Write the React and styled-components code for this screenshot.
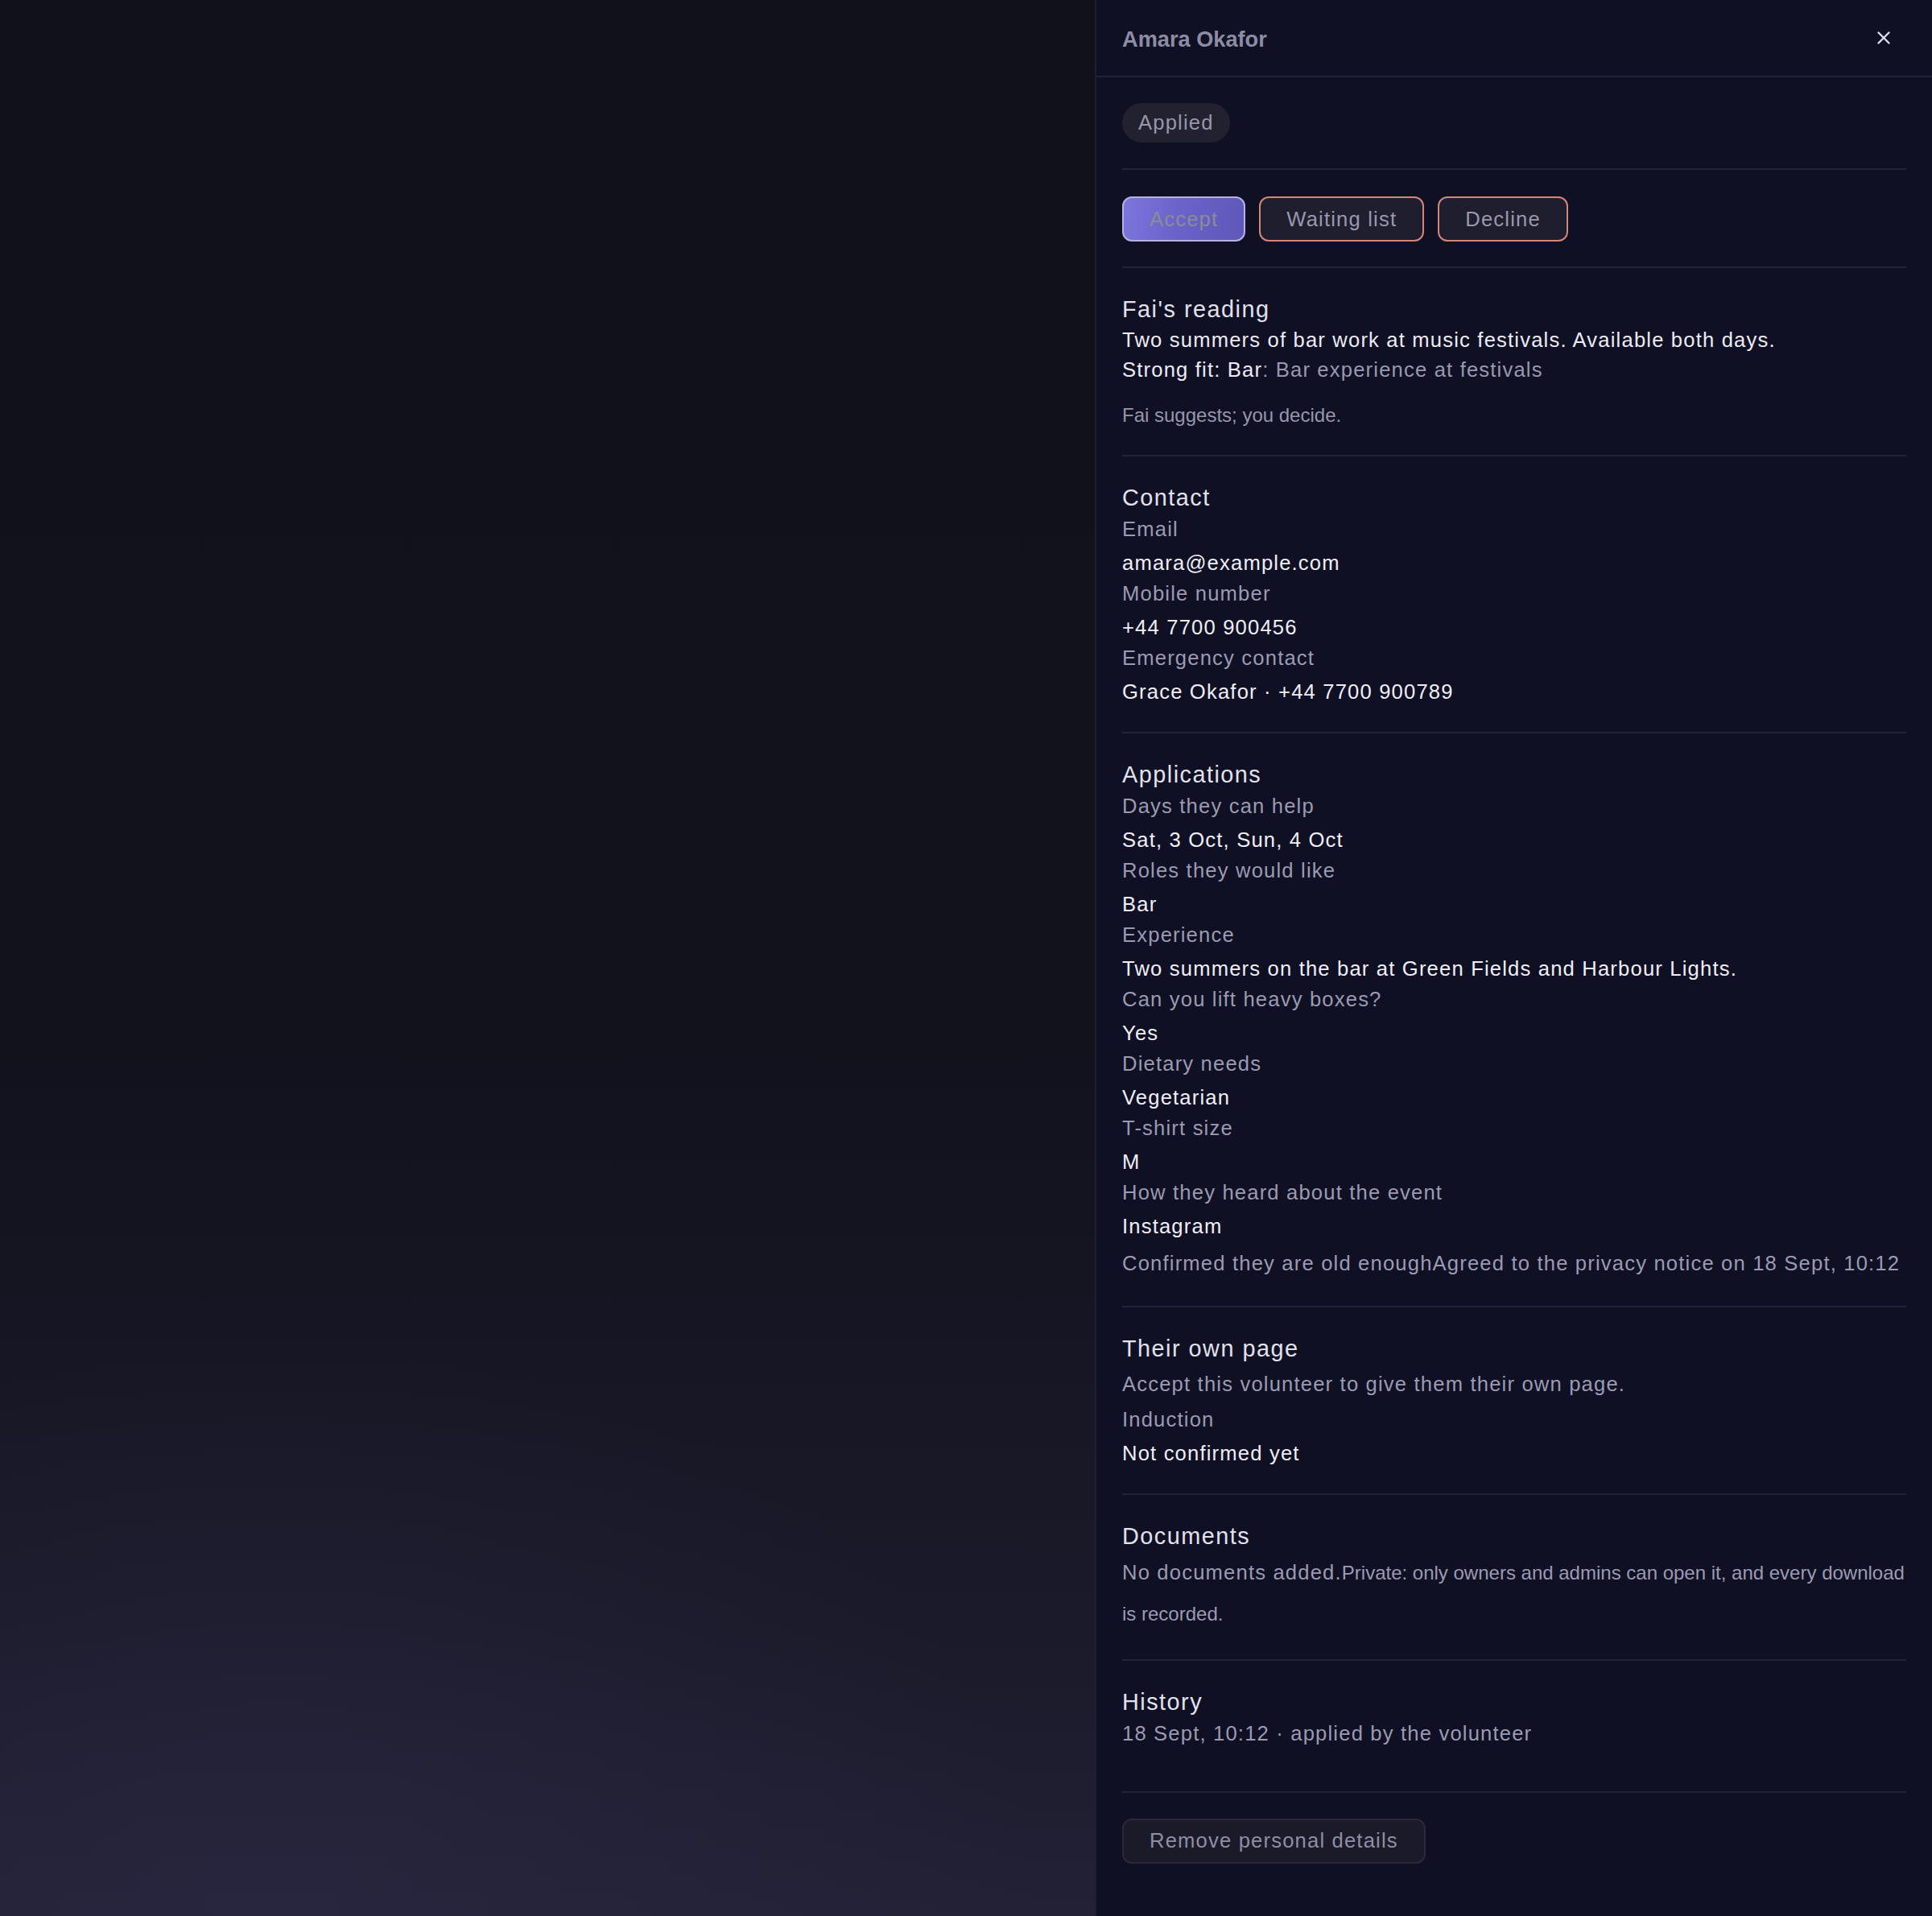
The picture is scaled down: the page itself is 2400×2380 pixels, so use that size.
import React from 'react'
import styled, { createGlobalStyle } from 'styled-components'

const GlobalStyle = createGlobalStyle`
  html, body {
    margin: 0;
    padding: 0;
    background: #0f1023;
  }
  body {
    font-family: "Liberation Sans", Arial, Helvetica, sans-serif;
    -webkit-font-smoothing: antialiased;
  }
  * {
    box-sizing: border-box;
  }
`

const contactFields = [
  { label: 'Email', value: 'amara@example.com' },
  { label: 'Mobile number', value: '+44 7700 900456' },
  { label: 'Emergency contact', value: 'Grace Okafor · +44 7700 900789' },
]

const applicationFields = [
  { label: 'Days they can help', value: 'Sat, 3 Oct, Sun, 4 Oct' },
  { label: 'Roles they would like', value: 'Bar' },
  { label: 'Experience', value: 'Two summers on the bar at Green Fields and Harbour Lights.' },
  { label: 'Can you lift heavy boxes?', value: 'Yes' },
  { label: 'Dietary needs', value: 'Vegetarian' },
  { label: 'T-shirt size', value: 'M' },
  { label: 'How they heard about the event', value: 'Instagram' },
]

const inductionFields = [{ label: 'Induction', value: 'Not confirmed yet' }]

const Fields = ({ items }) => (
  <FieldList>
    {items.map((f) => (
      <React.Fragment key={f.label}>
        <FieldLabel>{f.label}</FieldLabel>
        <FieldValue>{f.value}</FieldValue>
      </React.Fragment>
    ))}
  </FieldList>
)

const CloseIcon = () => (
  <svg width="16" height="16" viewBox="0 0 16 16" fill="none">
    <path d="M1.5 1.5L14.5 14.5M14.5 1.5L1.5 14.5" stroke="currentColor" strokeWidth="2.4" strokeLinecap="round" />
  </svg>
)

const App = () => {
  return (
    <>
      <GlobalStyle />
      <Page>
        <Backdrop />
        <Drawer>
          <Header>
            <Name>Amara Okafor</Name>
            <CloseButton aria-label="Close">
              <CloseIcon />
            </CloseButton>
          </Header>

          <Body>
            <Section>
              <StatusPill>Applied</StatusPill>
            </Section>

            <Section $actions>
              <Actions>
                <ActionButton $variant="primary">Accept</ActionButton>
                <ActionButton>Waiting list</ActionButton>
                <ActionButton>Decline</ActionButton>
              </Actions>
            </Section>

            <Section>
              <SectionTitle>Fai's reading</SectionTitle>
              <Summary>Two summers of bar work at music festivals. Available both days.</Summary>
              <Summary>
                Strong fit: Bar<Muted>: Bar experience at festivals</Muted>
              </Summary>
              <Hint>Fai suggests; you decide.</Hint>
            </Section>

            <Section>
              <SectionTitle>Contact</SectionTitle>
              <Fields items={contactFields} />
            </Section>

            <Section>
              <SectionTitle>Applications</SectionTitle>
              <Fields items={applicationFields} />
              <Consent>
                <span>Confirmed they are old enough</span>
                <span>Agreed to the privacy notice on 18 Sept, 10:12</span>
              </Consent>
            </Section>

            <Section>
              <SectionTitle>Their own page</SectionTitle>
              <Note>Accept this volunteer to give them their own page.</Note>
              <Fields items={inductionFields} />
            </Section>

            <Section>
              <SectionTitle>Documents</SectionTitle>
              <Documents>
                <span>No documents added.</span>
                <Small>Private: only owners and admins can open it, and every download is recorded.</Small>
              </Documents>
            </Section>

            <Section>
              <SectionTitle>History</SectionTitle>
              <HistoryList>
                <li>18 Sept, 10:12 · applied by the volunteer</li>
              </HistoryList>
            </Section>

            <Section $last>
              <GhostButton>Remove personal details</GhostButton>
            </Section>
          </Body>
        </Drawer>
      </Page>
    </>
  )
}

const Page = styled.div`
  display: grid;
  grid-template-columns: 1fr 1040px;
  min-height: 2380px;
`

const Backdrop = styled.div`
  background:
    radial-gradient(ellipse 70% 30% at 25% 100%, rgba(44, 42, 70, 0.55) 0%, rgba(44, 42, 70, 0) 100%),
    linear-gradient(180deg, #11111a 0%, #12121d 55%, #1a1a2a 85%, #222136 100%);
`

const Drawer = styled.aside`
  background: #0f1023;
  border-left: 2px solid #1f1f33;
  display: flex;
  flex-direction: column;
`

const Header = styled.header`
  height: 96px;
  padding: 0 32px;
  display: flex;
  align-items: center;
  justify-content: space-between;
  border-bottom: 2px solid #22223a;
`

const Name = styled.h2`
  margin: 3px 0 0;
  font-size: 27.2px;
  font-weight: 700;
  line-height: 36px;
  color: #8d8ca5;
`

const CloseButton = styled.button`
  width: 56px;
  height: 56px;
  border: 0;
  padding: 0;
  background: transparent;
  color: #dddcea;
  display: flex;
  align-items: center;
  justify-content: center;
  cursor: pointer;
`

const Body = styled.div`
  padding: 0 32px;
  display: flex;
  flex-direction: column;
`

const Section = styled.section`
  padding: ${(p) => (p.$actions ? '33px 0 31px' : '32px 0 31px')};
  border-bottom: ${(p) => (p.$last ? '0' : '2px solid #22223a')};
  letter-spacing: 0.046em;
  font-size: 25.6px;
`

const StatusPill = styled.span`
  display: inline-block;
  margin-bottom: 1px;
  padding: 6px 20px;
  line-height: 37px;
  border-radius: 999px;
  background: #22212f;
  color: #9896ad;
`

const Actions = styled.div`
  display: flex;
  gap: 17px;
`

const ActionButton = styled.button`
  height: 56px;
  padding: 0 32px;
  font: inherit;
  letter-spacing: inherit;
  border-radius: 12px;
  cursor: pointer;
  color: ${(p) => (p.$variant === 'primary' ? '#8c8b98' : '#9997ad')};
  border: 2px solid ${(p) => (p.$variant === 'primary' ? '#b6b2de' : '#d48679')};
  background: ${(p) =>
    p.$variant === 'primary'
      ? 'linear-gradient(100deg, #7d76de 0%, #6a63c9 45%, #5f58b9 100%)'
      : '#1f1e2e'};
`

const SectionTitle = styled.h3`
  margin: 0 0 1px;
  font-size: 28.8px;
  font-weight: 400;
  line-height: 38px;
  letter-spacing: 0.052em;
  color: #e2e1ee;
`

const Summary = styled.p`
  margin: 0;
  line-height: 37px;
  color: #ecebf6;
`

const Muted = styled.span`
  color: #9a98b0;
`

const Hint = styled.p`
  margin: 20px 0 0;
  font-size: 24px;
  line-height: 36px;
  letter-spacing: 0;
  color: #9896ac;
`

const FieldList = styled.dl`
  margin: 0;
`

const FieldLabel = styled.dt`
  line-height: 38px;
  color: #9c9ab3;
`

const FieldValue = styled.dd`
  margin: 0;
  padding-top: 4px;
  line-height: 38px;
  color: #efeef8;
`

const Consent = styled.p`
  margin: 5px 0 0;
  line-height: 44px;
  color: #9c9ab3;
`

const Note = styled.p`
  margin: 6px 0;
  line-height: 38px;
  color: #9c9ab3;
`

const Documents = styled.p`
  margin: 0;
  line-height: 50px;
  color: #9c9ab3;
`

const Small = styled.span`
  font-size: 24px;
  letter-spacing: 0;
`

const HistoryList = styled.ul`
  list-style: none;
  margin: 0 0 21.5px;
  padding: 0;
  line-height: 38px;
  color: #9c9ab3;
`

const GhostButton = styled.button`
  height: 56px;
  padding: 0 32px;
  font: inherit;
  letter-spacing: inherit;
  color: #8f8ea4;
  background: #1b1a29;
  border: 2px solid #2a293b;
  border-radius: 12px;
  cursor: pointer;
`

export default App
